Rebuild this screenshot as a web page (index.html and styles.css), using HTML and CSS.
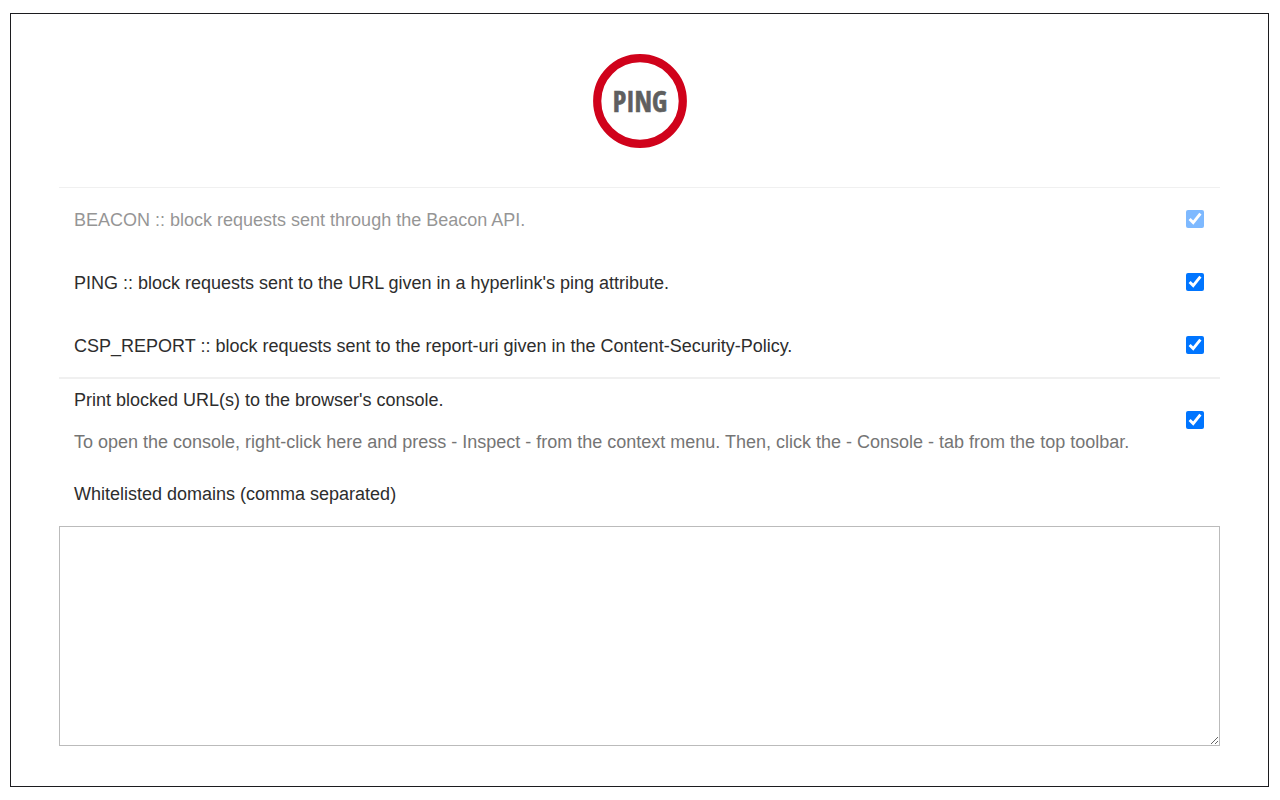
FILE: index.html
```html
<!DOCTYPE html>
<html lang="en">
<head>
    <meta charset="utf-8">
    <meta name="viewport" content="width=device-width, initial-scale=1.0">
    <title>Options</title>
    <link rel="stylesheet" href="styles.css">
</head>
<body>
    <div class="container">
        <div class="header">
            <svg class="logo" width="94" height="94" viewBox="0 0 94 94" role="img" aria-label="PING">
                <circle cx="47" cy="47" r="42.8" fill="#fff" stroke="#d0021b" stroke-width="8.2"/>
                <text class="logo-text" x="47" y="58" text-anchor="middle">PING</text>
            </svg>
        </div>
        <div class="options">
            <div class="row disabled">
                <label for="beacon">BEACON :: block requests sent through the Beacon API.</label>
                <input type="checkbox" id="beacon" checked aria-disabled="true">
            </div>
            <div class="row">
                <label for="ping">PING :: block requests sent to the URL given in a hyperlink's ping attribute.</label>
                <input type="checkbox" id="ping" checked>
            </div>
            <div class="row">
                <label for="csp">CSP_REPORT :: block requests sent to the report-uri given in the Content-Security-Policy.</label>
                <input type="checkbox" id="csp" checked>
            </div>
        </div>
        <div class="row console">
            <div>
                <label for="print">Print blocked URL(s) to the browser's console.</label>
                <p class="hint">To open the console, right-click here and press - Inspect - from the context menu. Then, click the - Console - tab from the top toolbar.</p>
            </div>
            <input type="checkbox" id="print" checked>
        </div>
        <label class="title" for="whitelist">Whitelisted domains (comma separated)</label>
        <textarea id="whitelist"></textarea>
    </div>
</body>
</html>
```

FILE: styles.css
```css
* {
    box-sizing: border-box;
}

body {
    font-family: Arial, "Liberation Sans", sans-serif;
    font-size: 18px;
    line-height: 22px;
    color: #2d2d2d;
    background-color: #fff;
    margin: 13px 11px 13px 10px;
}

.container {
    border: 1px solid #1c1c1f;
    padding: 40px 48px;
}

.header {
    display: flex;
    justify-content: center;
    padding-bottom: 39px;
}

.logo-text {
    font-family: "Open Sans Condensed", "Liberation Sans Narrow", "Liberation Sans", sans-serif;
    font-size: 28px;
    font-weight: bold;
    fill: #5f5f5f;
    stroke: #5f5f5f;
    stroke-width: 0.6px;
}

.options {
    border-top: 1px solid #f0f0f0;
    border-bottom: 2px solid #f0f0f0;
}

.row {
    display: flex;
    align-items: center;
    justify-content: space-between;
    min-height: 63px;
    padding: 0 16px 0 15px;
}

.row input {
    width: 18px;
    height: 18px;
    margin: 0 0 2px;
    flex-shrink: 0;
    accent-color: #0075ff;
}

.disabled {
    opacity: 0.5;
    pointer-events: none;
}

.console {
    min-height: 84px;
}

.hint {
    margin: 20px 0 0;
    color: #757575;
}

.title {
    display: block;
    padding: 20px 15px 21px;
}

textarea {
    display: block;
    width: 100%;
    height: 220px;
    border: 1px solid #bbb;
    padding: 10px 15px;
    font: inherit;
    resize: both;
}
```
